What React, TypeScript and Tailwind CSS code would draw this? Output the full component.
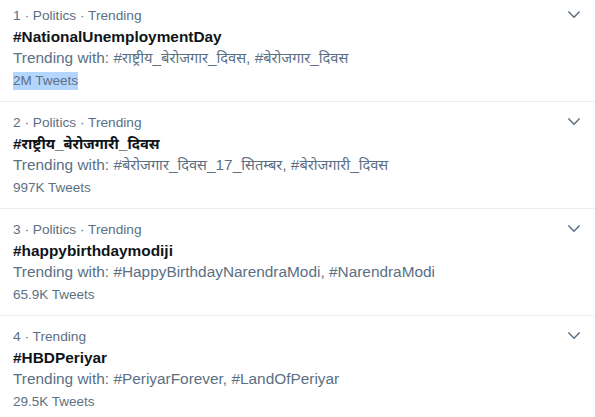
import React from "react";

const rows = [
  {
    cat: "1 · Politics · Trending",
    title: "#NationalUnemploymentDay",
    with: "#राष्ट्रीय_बेरोजगार_दिवस, #बेरोजगार_दिवस",
    tweets: "2M Tweets",
    hl: true,
  },
  {
    cat: "2 · Politics · Trending",
    title: "#राष्ट्रीय_बेरोजगारी_दिवस",
    with: "#बेरोजगार_दिवस_17_सितम्बर, #बेरोजगारी_दिवस",
    tweets: "997K Tweets",
    hl: false,
  },
  {
    cat: "3 · Politics · Trending",
    title: "#happybirthdaymodiji",
    with: "#HappyBirthdayNarendraModi, #NarendraModi",
    tweets: "65.9K Tweets",
    hl: false,
  },
  {
    cat: "4 · Trending",
    title: "#HBDPeriyar",
    with: "#PeriyarForever, #LandOfPeriyar",
    tweets: "29.5K Tweets",
    hl: false,
  },
];

function Mixed({ text }: { text: string }) {
  const parts = text.split(/([\u0900-\u097F]+)/);
  return (
    <>
      {parts.map((p, i) =>
        /[\u0900-\u097F]/.test(p) ? (
          <span key={i} className="text-[0.95em]">
            {p}
          </span>
        ) : (
          <React.Fragment key={i}>{p}</React.Fragment>
        )
      )}
    </>
  );
}

function Chevron() {
  return (
    <svg viewBox="0 0 12 8" width="12" height="8" fill="none" stroke="#5b7083" strokeWidth="1.5" strokeLinecap="round" strokeLinejoin="round">
      <polyline points="0.9,0.9 6,6.2 11.1,0.9" />
    </svg>
  );
}

export default function App() {
  return (
    <div
      className="w-[595px] h-[417px] overflow-hidden bg-white"
      style={{ fontFamily: '"Liberation Sans", "Noto Sans", "Noto Sans Devanagari", sans-serif' }}
    >
      <div className="mt-[-5px]">
        {rows.map((r, i) => (
          <div key={i} className="flex border-b border-[#ebeef0] pl-[13px] pr-[15px] pt-[11px] pb-[11px] h-[107px]">
            <div className="flex-1 flex flex-col">
              <div className="text-[13.7px] leading-[20px] text-[#5b7083]">{r.cat}</div>
              <div className="text-[15.4px] leading-[22px] font-bold text-[#0f1419]">
                <Mixed text={r.title} />
              </div>
              <div className="text-[15.4px] leading-[20px] text-[#5b7083]">
                Trending with: <Mixed text={r.with} />
              </div>
              <div className="mt-[4px] text-[13.5px] leading-[18px] text-[#5b7083]">
                <span className={r.hl ? "inline-block bg-[#b4d5fe]" : "inline-block"}>{r.tweets}</span>
              </div>
            </div>
            <div className="mt-[4.5px]">
              <Chevron />
            </div>
          </div>
        ))}
      </div>
    </div>
  );
}
